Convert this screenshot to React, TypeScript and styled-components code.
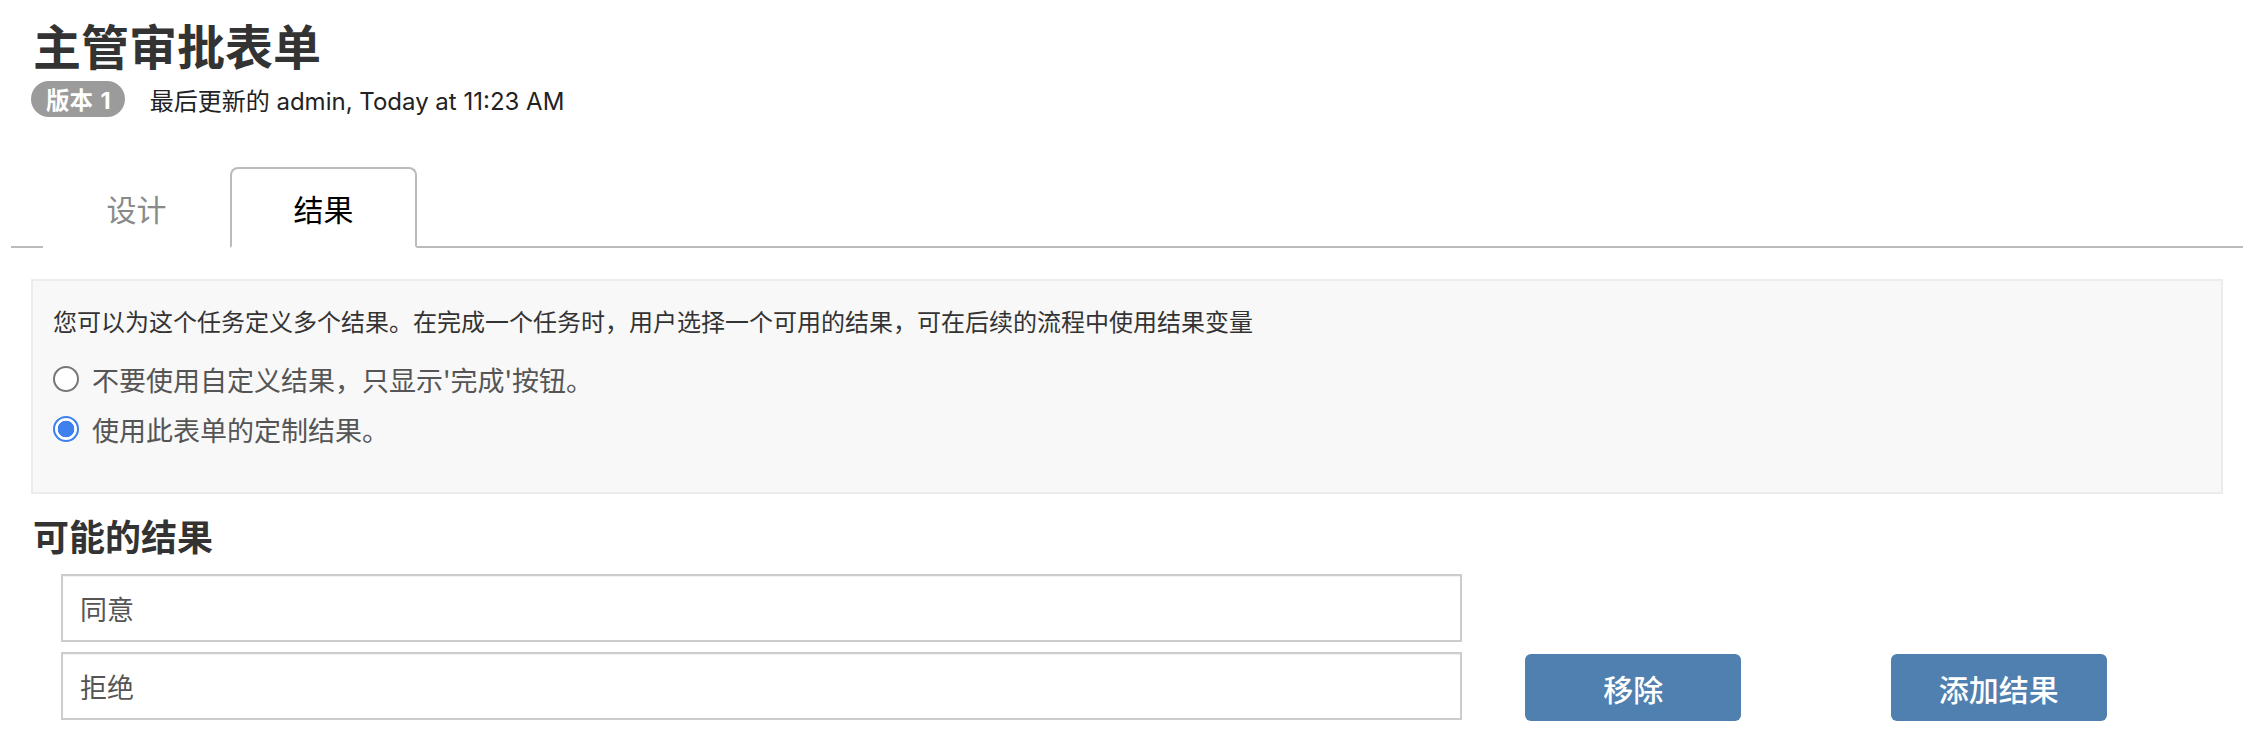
import React, { useState } from "react";
import styled, { createGlobalStyle } from "styled-components";

const GlobalStyle = createGlobalStyle`
  html, body {
    margin: 0;
    padding: 0;
    background: #ffffff;
  }
  body {
    font-family: "Inter", "Noto Sans CJK SC", sans-serif;
    color: #333333;
  }
  * { box-sizing: border-box; }
`;

const Page = styled.div`
  padding: 0 27px 40px 31px;
  width: 2250px;
`;

const Title = styled.h1`
  margin: 20px 0 0 2px;
  font-size: 48px;
  line-height: 48px;
  font-weight: 700;
  color: #333333;
  font-family: "Noto Sans CJK SC", sans-serif;
`;

const MetaRow = styled.div`
  display: flex;
  align-items: center;
  height: 36px;
  margin-top: 13px;
`;

const Badge = styled.span`
  display: inline-flex;
  align-items: center;
  height: 36px;
  padding: 0 14px 0 15px;
  border-radius: 18px;
  background: #9b9b9b;
  color: #ffffff;
  font-size: 23.5px;
  font-weight: 700;
  word-spacing: 2px;
  font-family: "Inter", "Noto Sans CJK SC", sans-serif;
`;

const MetaText = styled.span`
  margin-left: 25px;
  font-size: 24px;
  color: #222222;
`;

const TabBar = styled.div`
  display: flex;
  margin: 50px -20px 0 -20px;
  padding-left: 32px;
  border-bottom: 2px solid #bbbbbb;
`;

const Tab = styled.div<{ $active?: boolean }>`
  width: 187px;
  height: 81px;
  margin-bottom: -2px;
  display: flex;
  align-items: center;
  justify-content: center;
  font-size: 30px;
  font-family: "Noto Sans CJK SC", sans-serif;
  color: ${(p) => (p.$active ? "#000000" : "#8a8a8a")};
  background: #ffffff;
  border: 2px solid ${(p) => (p.$active ? "#bbbbbb" : "transparent")};
  border-bottom: 2px solid ${(p) => (p.$active ? "#ffffff" : "transparent")};
  border-radius: 8px 8px 0 0;
  cursor: pointer;
`;

const Panel = styled.div`
  margin-top: 31px;
  height: 215px;
  background: #f8f8f8;
  border: 2px solid #ececec;
  padding: 23px 20px 0 20px;
`;

const Description = styled.p`
  margin: 0;
  font-size: 24px;
  line-height: 34px;
  color: #333333;
  font-family: "Noto Sans CJK SC", sans-serif;
`;

const RadioList = styled.div`
  margin-top: 16px;
  display: flex;
  flex-direction: column;
`;

const RadioRow = styled.label`
  display: flex;
  align-items: center;
  height: 50px;
  cursor: pointer;
`;

const RadioInput = styled.input`
  appearance: none;
  -webkit-appearance: none;
  margin: 0;
  width: 26px;
  height: 26px;
  border-radius: 50%;
  border: 2px solid #777777;
  background: #ffffff;
  flex-shrink: 0;
  &:checked {
    border-color: #3d80ee;
    background: radial-gradient(circle, #3d80ee 0, #3d80ee 8px, #ffffff 8.6px);
  }
`;

const RadioText = styled.span`
  margin-left: 13px;
  font-size: 27px;
  color: #555555;
  font-family: "Noto Sans CJK SC", sans-serif;
`;

const SectionHeading = styled.h2`
  margin: 19px 0 0 2px;
  font-size: 36px;
  line-height: 44px;
  font-weight: 700;
  color: #333333;
  font-family: "Noto Sans CJK SC", sans-serif;
`;

const Outcomes = styled.div`
  margin-top: 17px;
  display: flex;
  flex-direction: column;
  gap: 10px;
`;

const OutcomeRow = styled.div`
  display: grid;
  grid-template-columns: 8fr 2fr 2fr;
`;

const Cell = styled.div`
  padding: 0 30px;
`;

const OutcomeInput = styled.input`
  display: block;
  width: 100%;
  height: 68px;
  border: 2px solid #cccccc;
  box-shadow: inset 0 1px 1px rgba(0, 0, 0, 0.06);
  background: #ffffff;
  padding: 0 17px;
  font-size: 27px;
  color: #555555;
  font-family: "Noto Sans CJK SC", sans-serif;
  outline: none;
`;

const ActionButton = styled.button`
  display: flex;
  align-items: center;
  justify-content: center;
  width: 216px;
  height: 67px;
  margin: 2px 0 0 3px;
  border: none;
  border-radius: 6px;
  background: #5080b0;
  color: #ffffff;
  font-size: 30px;
  font-weight: 500;
  font-family: "Noto Sans CJK SC", sans-serif;
  cursor: pointer;
`;

export default function App() {
  const [mode, setMode] = useState("custom");
  const [tab, setTab] = useState("result");
  const [outcomes, setOutcomes] = useState(["同意", "拒绝"]);

  return (
    <Page>
      <GlobalStyle />
      <Title>主管审批表单</Title>
      <MetaRow>
        <Badge>版本 1</Badge>
        <MetaText>最后更新的 admin, Today at 11:23 AM</MetaText>
      </MetaRow>
      <TabBar>
        <Tab $active={tab === "design"} onClick={() => setTab("design")}>
          设计
        </Tab>
        <Tab $active={tab === "result"} onClick={() => setTab("result")}>
          结果
        </Tab>
      </TabBar>
      <Panel>
        <Description>
          您可以为这个任务定义多个结果。在完成一个任务时，用户选择一个可用的结果，可在后续的流程中使用结果变量
        </Description>
        <RadioList>
          <RadioRow>
            <RadioInput
              type="radio"
              name="mode"
              checked={mode === "default"}
              onChange={() => setMode("default")}
            />
            <RadioText>不要使用自定义结果，只显示'完成'按钮。</RadioText>
          </RadioRow>
          <RadioRow>
            <RadioInput
              type="radio"
              name="mode"
              checked={mode === "custom"}
              onChange={() => setMode("custom")}
            />
            <RadioText>使用此表单的定制结果。</RadioText>
          </RadioRow>
        </RadioList>
      </Panel>
      <SectionHeading>可能的结果</SectionHeading>
      <Outcomes>
        {outcomes.map((o, i) => (
          <OutcomeRow key={i}>
            <Cell>
              <OutcomeInput
                value={o}
                onChange={(e) => {
                  const next = [...outcomes];
                  next[i] = e.target.value;
                  setOutcomes(next);
                }}
              />
            </Cell>
            {i === outcomes.length - 1 && (
              <>
                <Cell>
                  <ActionButton>移除</ActionButton>
                </Cell>
                <Cell>
                  <ActionButton>添加结果</ActionButton>
                </Cell>
              </>
            )}
          </OutcomeRow>
        ))}
      </Outcomes>
    </Page>
  );
}
